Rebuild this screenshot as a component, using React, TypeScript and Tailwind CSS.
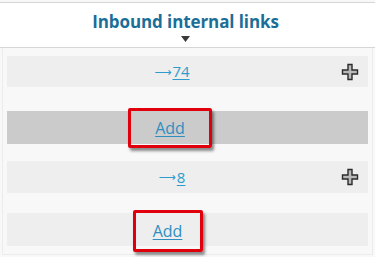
import React from 'react';

const PlusIcon: React.FC = () => (
  <svg width="18" height="18" viewBox="0 0 18 18">
    <path
      d="M7 1.5h4v5.5h5.5v4H11v5.5H7V11H1.5V7H7z"
      fill="#b9b9b9"
      stroke="#2b2b2b"
      strokeWidth="1.4"
      strokeLinejoin="miter"
    />
  </svg>
);

interface RowProps {
  label: React.ReactNode;
  shade?: boolean;
  plus?: boolean;
  className?: string;
}

const Row: React.FC<RowProps> = ({ label, shade, plus, className }) => (
  <div
    className={`relative flex items-center justify-center pr-[31px] ${
      shade ? 'bg-[#cbcbcb]' : 'bg-[#eeeeee]'
    } ${className ?? ''}`}
  >
    {label}
    {plus && (
      <span className="absolute right-[9px] top-1/2 -translate-y-1/2 flex">
        <PlusIcon />
      </span>
    )}
  </div>
);

const Count: React.FC<{ n: string }> = ({ n }) => (
  <span className="text-[15px] text-[#2d9bcc] flex items-center">
    <span className="text-[12px] leading-none" style={{ fontFamily: '"DejaVu Sans", sans-serif' }}>
      ⟶
    </span>
    <span className="underline underline-offset-[2px] ml-[1px]">{n}</span>
  </span>
);

const AddLink: React.FC<{ className?: string }> = ({ className }) => (
  <span
    className={`inline-flex items-center justify-center border-[3px] border-[#e0000b] rounded-[2px] shadow-[2px_3px_3px_rgba(0,0,0,0.45)] ${className ?? ''}`}
  >
    <a className="text-[16px] text-[#2d8fc0] underline underline-offset-[2px] cursor-pointer">Add</a>
  </span>
);

const App: React.FC = () => {
  return (
    <div
      className="w-[375px] h-[257px] overflow-hidden bg-[#f8f8f8]"
      style={{ fontFamily: '"Open Sans", "Noto Sans", sans-serif' }}
    >
      <header className="mt-[2px] h-[46px] bg-white border-t border-b border-[#d6d6d6] flex flex-col items-center pt-[7px]">
        <h1 className="text-[17px] leading-[24px] font-bold text-[#1b6e98] tracking-[-0.1px] mr-[4px]">
          Inbound internal links
        </h1>
        <svg width="9" height="6" viewBox="0 0 9 6" className="mt-[2px] ml-[-4px]">
          <path d="M0 0h9L4.5 6z" fill="#3a3a3a" />
        </svg>
      </header>

      <div className="border-l border-r border-[#ececec] mx-[2px] h-[62px] pt-[8px]">
        <Row className="h-[31px] mx-[4px]" plus label={<Count n="74" />} />
      </div>
      <div className="h-[50px] mx-[2px] border-l border-r border-[#ececec] pt-[1px]">
        <Row
          className="h-[33px] mx-[4px]"
          shade
          label={<AddLink className="w-[84px] h-[40px] mr-[4px]" />}
        />
      </div>
      <div className="h-[52px] mx-[2px] border-l border-r border-[#ececec] pt-[1px]">
        <Row className="h-[32px] mx-[4px]" plus label={<Count n="8" />} />
      </div>
      <div className="h-[43px] mx-[2px] border-l border-r border-b border-[#ececec] pt-[1px]">
        <Row
          className="h-[33px] mx-[4px]"
          label={<AddLink className="w-[70px] h-[42px] mr-[9px] mt-[2px]" />}
        />
      </div>
    </div>
  );
};

export default App;
